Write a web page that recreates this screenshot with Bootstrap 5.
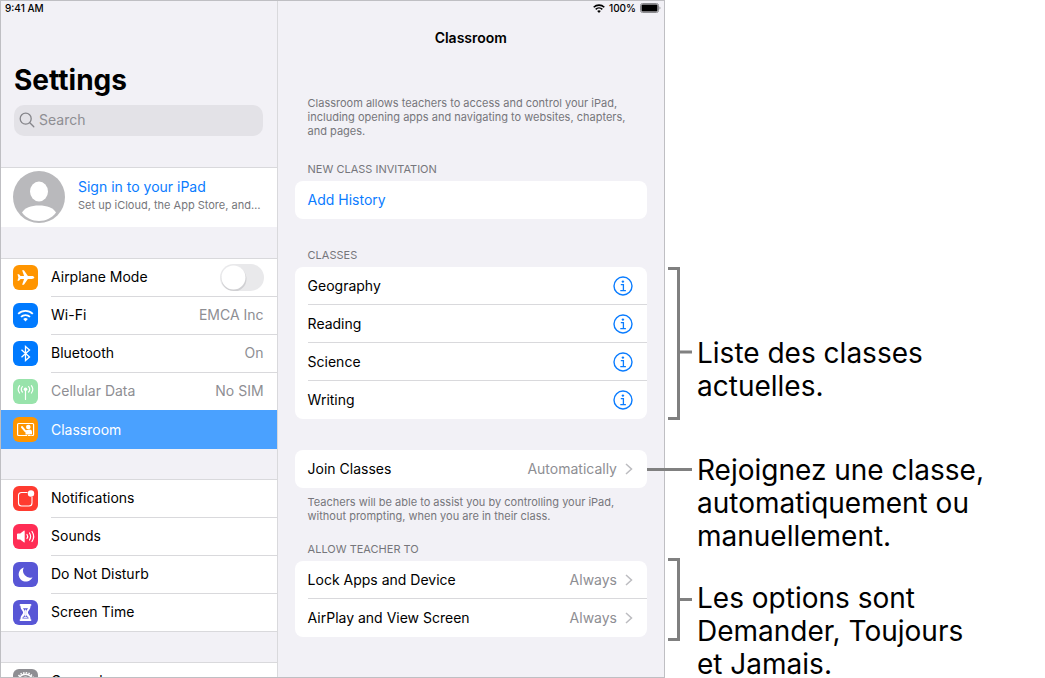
<!DOCTYPE html>
<html lang="fr">
<head>
<meta charset="utf-8">
<meta name="viewport" content="width=device-width, initial-scale=1">
<title>Classroom – Settings</title>
<link href="https://cdn.jsdelivr.net/npm/bootstrap@5.3.0/dist/css/bootstrap.min.css" rel="stylesheet">
<style>
  :root { --line: #d9d9dc; --frame: #bfbfc3; --muted-ink: #8e8e93; --note-ink: #76767b; --ios-blue: #0a7cff; --panel: #f2f1f6; }
  body { font-family: Inter, "Liberation Sans", sans-serif; font-size: 14px; line-height: 20px; color: #000; background: #fff; }
  a { text-decoration: none; color: inherit; }
  .guide { display: grid; grid-template: minmax(0, 1fr) / 665fr 380fr; height: 100vh; }
  .tablet { display: grid; grid-template: 14px minmax(0, 1fr) / 277fr 387fr; background: var(--panel); border: 1px solid var(--frame); overflow: hidden; min-height: 0; }
  .status-left, .status-right { font-size: 10px; font-weight: 500; line-height: 14px; }
  .status-right { padding-right: 3px; gap: 4px; }
  .split { border-right: 1px solid var(--line); }
  .pane { min-height: 0; overflow: hidden; }

  .page-title { font-size: 28px; line-height: 36px; font-weight: 700; margin: 47px 0 7px; padding: 0 13px; }
  .finder { background: #e3e2e7; border-radius: 10px; height: 31px; margin: 0 14px 31px 13px; padding: 0 5px 1px; }
  .finder input { background: transparent; border: 0; padding: 0; font-size: 14px; line-height: 20px; color: #000; box-shadow: none !important; }
  .finder input::placeholder { color: var(--muted-ink); opacity: 1; }

  .group { background: #fff; border-top: 1px solid var(--line); margin-bottom: 30px; }
  .account { height: 60px; padding: 0 0 2px 12px; gap: 13px; margin-bottom: 31px; }
  .account-name { color: var(--ios-blue); line-height: 20px; }
  .account-hint { color: var(--note-ink); font-size: 11px; line-height: 16px; }

  .entry { height: 38px; padding-left: 12px; gap: 13px; }
  .entry-main { height: 38px; border-bottom: 1px solid var(--line); padding: 0 13px 1px 0; min-width: 0; }
  .entry:last-child .entry-main { border-bottom-color: transparent; }
  .group.closed { border-bottom: 1px solid var(--line); }
  .group.closed .entry:last-child, .group.closed .entry:last-child .entry-main { height: 37px; border-bottom: 0; }
  .tile { width: 25px; height: 25px; border-radius: 6px; flex: none; margin-bottom: 1px; }
  .value, .dim { color: var(--muted-ink); }
  .active-entry { background: #4aa1ff; color: #fff; height: 39px; margin-top: -1px; }
  .active-entry .entry-main { border: 0; padding: 0; }

  .form-switch .toggle { width: 44px; height: 27px; margin: 0; border: 0; border-radius: 14px; background-color: #e9e9eb;
    background-image: url("data:image/svg+xml,%3Csvg xmlns='http://www.w3.org/2000/svg' viewBox='0 0 27 27'%3E%3Ccircle cx='14' cy='15' r='12.5' fill='%23d0d0d3'/%3E%3Ccircle cx='13.5' cy='13.5' r='12' fill='%23fff'/%3E%3C/svg%3E");
    background-size: 27px 27px; }

  .detail { padding: 0 17px; }
  .detail-title { font-size: 14px; line-height: 20px; font-weight: 600; margin: 13px 0 48px; }
  .note { color: var(--note-ink); font-size: 11px; line-height: 14px; padding: 0 13px; margin: 0; }
  .label-row { color: var(--note-ink); font-size: 11px; line-height: 14px; font-weight: 400; padding: 0 13px; margin: 24px 0 5px; }
  .sheet { background: #fff; border-radius: 8px; padding-left: 13px; }
  .sheet-row { height: 38px; padding-right: 14px; border-bottom: 1px solid var(--line); }
  .sheet-row:last-child { border-bottom-color: transparent; }
  .sheet + .label-row { margin-top: 29px; }
  .sheet + .sheet { margin-top: 31px; }
  .sheet + .note { margin: 7px 0 19px; }
  .note + .label-row.after-note { margin-top: 0; }
  .info-btn { width: 20px; height: 20px; line-height: 0; }

  .callouts { padding-left: 3px; min-width: 0; font-size: 28px; line-height: 33px; }
  .callouts p { margin: 0; padding-left: 5px; white-space: nowrap; }
  .leader { flex: none; stroke: #808080; stroke-width: 3; fill: none; }
  .leader-long { margin-left: -21px; position: relative; z-index: 2; }
  .callout-a { padding-top: 267px; }
  .callout-a p { padding-top: 70px; }
  .callout-b { padding-top: 34px; }
  .callout-c { padding-top: 5px; }
  .callout-c p { padding-top: 24px; }
</style>
</head>
<body>
<svg width="0" height="0" class="position-absolute" aria-hidden="true">
  <symbol id="info" viewBox="0 0 20 20"><circle cx="10" cy="10" r="9" fill="none" stroke="#0a7cff" stroke-width="1.400"/><circle cx="9.900" cy="5.600" r="1.200" fill="#0a7cff"/><path d="M7.800 8.700h2.600v6M7.300 14.700h5.600" fill="none" stroke="#0a7cff" stroke-width="1.300"/></symbol>
  <symbol id="chev" viewBox="0 0 8 12"><path d="m1 1 5.500 5L1 11" fill="none" stroke="#bcbcc0" stroke-width="1.500"/></symbol>
</svg>
<div class="guide">
  <main class="tablet">
    <div class="split status-left ps-1">9:41 AM</div>
    <div class="status-right d-flex justify-content-end align-items-center">
      <svg width="12" height="9" viewBox="0 0 12 9" aria-label="Wi-Fi"><g fill="none" stroke="#000" stroke-width="1.600"><path d="M.7 3.300a7.600 7.600 0 0 1 10.600 0M2.700 5.400a4.700 4.700 0 0 1 6.600 0"/></g><path d="M6 9 4.200 7.100a2.600 2.600 0 0 1 3.600 0z"/></svg>
      <span>100%</span>
      <svg width="21" height="10" viewBox="0 0 21 10" aria-label="Battery"><rect x=".5" y=".5" width="18" height="9" rx="2" fill="none" stroke="#8b8b8f"/><rect x="1.500" y="1.500" width="16" height="7" rx="1"/><path d="M19.500 3.400c1.200.3 1.200 2.900 0 3.200z" fill="#8b8b8f"/></svg>
    </div>

    <nav class="split pane" aria-label="Settings">
      <h1 class="page-title">Settings</h1>
      <div class="finder d-flex align-items-center gap-1">
        <label for="search" class="d-flex" aria-label="Search"><svg width="16" height="16" viewBox="0 0 16 16" fill="none" stroke="#85858a" stroke-width="1.300" stroke-linecap="round"><circle cx="6.700" cy="6.700" r="5.500"/><path d="m10.800 10.800 4 4"/></svg></label>
        <input id="search" type="search" class="form-control" placeholder="Search">
      </div>

      <div class="group account d-flex align-items-center">
        <svg width="52" height="52" viewBox="0 0 52 52" class="flex-shrink-0"><circle cx="26" cy="26" r="26" fill="#b9b9bc"/><ellipse cx="26" cy="20.500" rx="9" ry="10" fill="#fff"/><path d="M9 41.500C11.500 37 18 34.500 26 34.500S40.500 37 43 41.500C39 47 33 50 26 50S13 47 9 41.500z" fill="#fff"/></svg>
        <a href="#" class="flex-grow-1 text-truncate pe-2 pb-1">
          <div class="account-name">Sign in to your iPad</div>
          <div class="account-hint">Set up iCloud, the App Store, and…</div>
        </a>
      </div>

      <div class="group">
        <div class="entry d-flex align-items-center">
          <svg class="tile" viewBox="0 0 25 25"><rect width="25" height="25" fill="#ff9500"/><path fill="#fff" d="M21.300 12.500c0 .8-1.300 1.400-2.500 1.400h-3.900l-4 5.900H9.100l2-5.900H7.500L6 15.700H4.500l.9-3.200-.9-3.200H6l1.500 1.800h3.600l-2-5.900h1.800l4 5.900h3.900c1.200 0 2.500.6 2.500 1.400z"/></svg>
          <div class="entry-main flex-grow-1 d-flex align-items-center justify-content-between">
            <label for="airplane">Airplane Mode</label>
            <div class="form-switch p-0 m-0 d-flex"><input id="airplane" class="form-check-input toggle" type="checkbox" role="switch"></div>
          </div>
        </div>
        <a href="#" class="entry d-flex align-items-center">
          <svg class="tile" viewBox="0 0 25 25"><rect width="25" height="25" fill="#007aff"/><g fill="none" stroke="#fff" stroke-width="1.800"><path d="M5.200 10.900a10.500 10.500 0 0 1 14.600 0M8 13.900a6.400 6.400 0 0 1 9 0"/></g><path fill="#fff" d="m12.500 18.500-2.300-2.400a3.300 3.300 0 0 1 4.600 0z"/></svg>
          <div class="entry-main flex-grow-1 d-flex align-items-center justify-content-between"><span>Wi-Fi</span><span class="value">EMCA Inc</span></div>
        </a>
        <a href="#" class="entry d-flex align-items-center">
          <svg class="tile" viewBox="0 0 25 25"><rect width="25" height="25" fill="#007aff"/><path fill="none" stroke="#fff" stroke-width="1.300" d="m8.500 8.800 8 7.200-4 3.600V5.400l4 3.600-8 7.200"/></svg>
          <div class="entry-main flex-grow-1 d-flex align-items-center justify-content-between"><span>Bluetooth</span><span class="value">On</span></div>
        </a>
        <a href="#" class="entry d-flex align-items-center dim">
          <svg class="tile" viewBox="0 0 25 25"><rect width="25" height="25" fill="#98e3ab"/><g fill="none" stroke="#fff" stroke-width="1.200" stroke-linecap="round"><path d="M12.500 11v9.500M9.400 13a3.800 3.800 0 0 1 0-5.400M15.600 13a3.800 3.800 0 0 0 0-5.400M6.600 14a6 6 0 0 1 0-7.400M18.400 14a6 6 0 0 0 0-7.400"/></g><circle cx="12.500" cy="10.200" r="1.800" fill="#fff"/></svg>
          <div class="entry-main flex-grow-1 d-flex align-items-center justify-content-between"><span>Cellular Data</span><span class="value">No SIM</span></div>
        </a>
        <a href="#" class="entry active-entry position-relative d-flex align-items-center" aria-current="page">
          <svg class="tile" viewBox="0 0 25 25"><rect width="25" height="25" fill="#ff9500"/><rect x="4.600" y="6.500" width="16" height="12" rx="1" fill="none" stroke="#fff" stroke-width="1.200"/><circle cx="15.300" cy="10" r="2.300" fill="#fff"/><path fill="#fff" d="M8.300 9.200c.5-.5 1-.3 1.300.1l3.200 3.900 3.700-.6c1.800 0 2.500 1 2.500 2.300v2.600h-6.500v-2.200c-.9-.2-4.500-4.900-4.500-4.900z"/><path d="M18 18.500v-1.300M14.500 18v.8" stroke="#ff9500"/></svg>
          <div class="entry-main flex-grow-1 d-flex align-items-center"><span>Classroom</span></div>
        </a>
      </div>

      <div class="group closed">
        <a href="#" class="entry d-flex align-items-center">
          <svg class="tile" viewBox="0 0 25 25"><rect width="25" height="25" fill="#ff3b30"/><path fill="none" stroke="#fff" stroke-width="1.100" d="M14.500 6.500H8.500a3 3 0 0 0-3 3v7.500a3 3 0 0 0 3 3H16a3 3 0 0 0 3-3v-6"/><circle cx="18" cy="7.500" r="3.200" fill="#fff"/></svg>
          <div class="entry-main flex-grow-1 d-flex align-items-center"><span>Notifications</span></div>
        </a>
        <a href="#" class="entry d-flex align-items-center">
          <svg class="tile" viewBox="0 0 25 25"><rect width="25" height="25" fill="#ff2d55"/><path fill="#fff" d="M4 10.500c0-.6.300-.9.900-.9h2.300l3.600-2.900c.4-.3.900-.1.900.4v10.800c0 .5-.5.700-.9.400l-3.600-2.900H4.900c-.6 0-.9-.3-.9-.9z"/><g fill="none" stroke="#fff" stroke-width="1.200" stroke-linecap="round"><path d="M14 10.500a3.500 3.500 0 0 1 0 4M16.500 9a6.500 6.500 0 0 1 0 7M19 7.500a9 9 0 0 1 0 10"/></g></svg>
          <div class="entry-main flex-grow-1 d-flex align-items-center"><span>Sounds</span></div>
        </a>
        <a href="#" class="entry d-flex align-items-center">
          <svg class="tile" viewBox="0 0 25 25"><rect width="25" height="25" fill="#5856d6"/><path fill="#fff" d="M10.800 5.500a7.200 7.200 0 1 0 8.700 9.700A7 7 0 0 1 10.800 5.500z"/></svg>
          <div class="entry-main flex-grow-1 d-flex align-items-center"><span>Do Not Disturb</span></div>
        </a>
        <a href="#" class="entry d-flex align-items-center">
          <svg class="tile" viewBox="0 0 25 25"><rect width="25" height="25" fill="#5856d6"/><path fill="#fff" d="M7.500 4h10c.6 0 .9.300.9.900s-.3.900-.9.900v1c0 2.700-2.600 3.800-2.600 5.700s2.600 3 2.600 5.700v1c.6 0 .9.300.9.900s-.3.900-.9.900h-10c-.6 0-.9-.3-.9-.9s.3-.9.900-.9v-1c0-2.700 2.600-3.800 2.600-5.700S7.500 9.500 7.500 6.800v-1c-.6 0-.9-.3-.9-.9s.3-.9.900-.9z"/><path d="M10 8.300h5c-.4 1.200-1.800 2-1.900 3.200v3.500c.4 1 2.300 1.600 2.600 3.500H9.300c.3-1.900 2.200-2.500 2.600-3.500v-3.500C11.800 10.300 10.400 9.500 10 8.300z" fill="#5856d6"/><path d="M12.500 9.500v7M10.600 17.400h3.800" stroke="#fff" stroke-width=".9"/></svg>
          <div class="entry-main flex-grow-1 d-flex align-items-center"><span>Screen Time</span></div>
        </a>
      </div>

      <div class="group">
        <a href="#" class="entry d-flex align-items-center">
          <svg class="tile" viewBox="0 0 25 25"><rect width="25" height="25" fill="#8e8e93"/><circle cx="12.500" cy="12.500" r="8.700" fill="none" stroke="#fff" stroke-width="1.600" stroke-dasharray="1.500 1.230"/><circle cx="12.500" cy="12.500" r="7.300" fill="none" stroke="#fff" stroke-width="1.500"/><circle cx="12.500" cy="12.500" r="4.500" fill="none" stroke="#fff"/></svg>
          <div class="entry-main flex-grow-1 d-flex align-items-center"><span>General</span></div>
        </a>
      </div>
    </nav>

    <section class="pane detail" aria-label="Classroom">
      <h2 class="detail-title text-center">Classroom</h2>
      <p class="note">Classroom allows teachers to access and control your iPad,<br>including opening apps and navigating to websites, chapters,<br>and pages.</p>

      <h3 class="label-row">NEW CLASS INVITATION</h3>
      <div class="sheet"><a href="#" class="sheet-row d-flex align-items-center account-name">Add History</a></div>

      <h3 class="label-row">CLASSES</h3>
      <div class="sheet">
        <div class="sheet-row d-flex align-items-center justify-content-between">Geography<button type="button" class="btn p-0 border-0 info-btn" aria-label="About Geography"><svg width="20" height="20"><use href="#info"/></svg></button></div>
        <div class="sheet-row d-flex align-items-center justify-content-between">Reading<button type="button" class="btn p-0 border-0 info-btn" aria-label="About Reading"><svg width="20" height="20"><use href="#info"/></svg></button></div>
        <div class="sheet-row d-flex align-items-center justify-content-between">Science<button type="button" class="btn p-0 border-0 info-btn" aria-label="About Science"><svg width="20" height="20"><use href="#info"/></svg></button></div>
        <div class="sheet-row d-flex align-items-center justify-content-between">Writing<button type="button" class="btn p-0 border-0 info-btn" aria-label="About Writing"><svg width="20" height="20"><use href="#info"/></svg></button></div>
      </div>

      <div class="sheet">
        <a href="#" class="sheet-row d-flex align-items-center justify-content-between"><span>Join Classes</span><span class="value d-flex align-items-center gap-2">Automatically<svg width="8" height="12"><use href="#chev"/></svg></span></a>
      </div>
      <p class="note">Teachers will be able to assist you by controlling your iPad,<br>without prompting, when you are in their class.</p>

      <h3 class="label-row after-note">ALLOW TEACHER TO</h3>
      <div class="sheet">
        <a href="#" class="sheet-row d-flex align-items-center justify-content-between"><span>Lock Apps and Device</span><span class="value d-flex align-items-center gap-2">Always<svg width="8" height="12"><use href="#chev"/></svg></span></a>
        <a href="#" class="sheet-row d-flex align-items-center justify-content-between"><span>AirPlay and View Screen</span><span class="value d-flex align-items-center gap-2">Always<svg width="8" height="12"><use href="#chev"/></svg></span></a>
      </div>
    </section>
  </main>

  <aside class="callouts">
    <div class="callout-a d-flex">
      <svg class="leader" width="24" height="153"><path d="M0 1.500h10.500v150H0M10.500 85H24"/></svg>
      <p>Liste des classes<br>actuelles.</p>
    </div>
    <div class="callout-b d-flex">
      <svg class="leader leader-long" width="45" height="32"><path d="M0 15.500h45"/></svg>
      <p>Rejoignez une classe,<br>automatiquement ou<br>manuellement.</p>
    </div>
    <div class="callout-c d-flex">
      <svg class="leader" width="24" height="83"><path d="M0 1.500h10.500v80H0M10.500 41.500H24"/></svg>
      <p>Les options sont<br>Demander, Toujours<br>et Jamais.</p>
    </div>
  </aside>
</div>
<script src="https://cdn.jsdelivr.net/npm/bootstrap@5.3.0/dist/js/bootstrap.bundle.min.js"></script>
</body>
</html>
